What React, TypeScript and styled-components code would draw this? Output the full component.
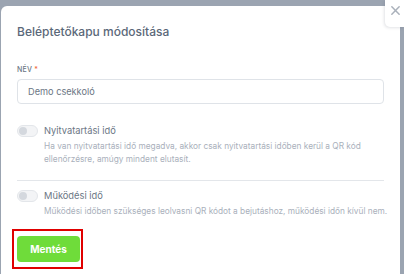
import styled, { createGlobalStyle } from "styled-components";

const GlobalStyle = createGlobalStyle`
  html, body {
    margin: 0;
    padding: 0;
    width: 404px;
    height: 274px;
    overflow: hidden;
    background: #9ba4b1;
    font-family: Inter, "Noto Sans", sans-serif;
  }
`;

const Backdrop = styled.div`
  position: relative;
  width: 404px;
  height: 274px;
  padding: 6px 4px 0 1px;
  box-sizing: border-box;
`;

const Modal = styled.div`
  background: #fff;
  height: 100%;
  border-radius: 6px 6px 0 0;
  padding: 18px 16px 0 16px;
  box-sizing: border-box;
`;

const CloseButton = styled.button`
  position: absolute;
  top: 0;
  right: 0;
  width: 19px;
  height: 27px;
  border: none;
  background: #fff;
  border-radius: 0 0 0 5px;
  box-shadow: -1px 1px 3px rgba(60, 70, 90, 0.15);
  display: flex;
  align-items: center;
  justify-content: center;
  padding: 0 0 6px 2px;
  color: #a9b0ba;
`;

const Title = styled.h2`
  margin: 0 0 26px 0;
  font-size: 12px;
  font-weight: 500;
  color: #5b6879;
`;

const Label = styled.div`
  font-size: 7px;
  font-weight: 500;
  color: #6b7684;
  letter-spacing: 0.2px;
  margin-bottom: 5px;
`;

const Req = styled.span`
  color: #f0643c;
`;

const Input = styled.div`
  height: 25px;
  border: 1px solid #dfe3e8;
  border-radius: 4px;
  box-sizing: border-box;
  display: flex;
  align-items: center;
  padding-left: 10px;
  font-size: 9.2px;
  color: #6b7684;
`;

const SwitchRow = styled.div<{ $top: number }>`
  display: flex;
  gap: 6px;
  margin-top: ${(p) => p.$top}px;
`;

const Track = styled.div`
  width: 18px;
  height: 10px;
  border-radius: 6px;
  border: 1px solid #e3e6ea;
  background: #f3f4f6;
  display: flex;
  align-items: center;
  padding-left: 1px;
  flex-shrink: 0;
`;

const Knob = styled.div`
  width: 8px;
  height: 8px;
  border-radius: 50%;
  background: #d4d8de;
`;

const SwitchText = styled.div`
  display: flex;
  flex-direction: column;
  margin-right: -8px;
`;

const SwitchLabel = styled.div`
  font-size: 9.3px;
  color: #6b7684;
  line-height: 12px;
`;

const Help = styled.div`
  font-size: 8.3px;
  color: #a9b0bb;
  line-height: 13px;
  margin-top: 3px;
`;

const Divider = styled.hr`
  border: none;
  border-top: 1px solid #e3e6ea;
  margin: 14px 0 0 0;
`;

const Outline = styled.div`
  display: inline-block;
  margin: 11px 0 0 -5px;
  border: 2px solid #e00000;
  padding: 5px 1px 5px 3px;
`;

const SaveButton = styled.button`
  width: 63px;
  height: 26px;
  border: none;
  border-radius: 4px;
  background: #6fdc3a;
  color: #fff;
  font-family: Inter, "Noto Sans", sans-serif;
  font-weight: 700;
  font-size: 10px;
  display: block;
`;

export default function App() {
  return (
    <>
      <GlobalStyle />
      <Backdrop>
        <Modal>
          <Title>Beléptetőkapu módosítása</Title>
          <Label>
            NÉV <Req>*</Req>
          </Label>
          <Input>Demo csekkoló</Input>
          <SwitchRow $top={21}>
            <Track>
              <Knob />
            </Track>
            <SwitchText>
              <SwitchLabel>Nyitvatartási idő</SwitchLabel>
              <Help>
                Ha van nyitvatartási idő megadva, akkor csak nyitvatartási
                időben kerül a QR kód
                <br />
                ellenőrzésre, amúgy mindent elutasít.
              </Help>
            </SwitchText>
          </SwitchRow>
          <Divider />
          <SwitchRow $top={9}>
            <Track>
              <Knob />
            </Track>
            <SwitchText>
              <SwitchLabel>Működési idő</SwitchLabel>
              <Help>
                Működési időben szükséges leolvasni QR kódot a bejutáshoz,
                működési időn kívül nem.
              </Help>
            </SwitchText>
          </SwitchRow>
          <Outline>
            <SaveButton>Mentés</SaveButton>
          </Outline>
        </Modal>
        <CloseButton aria-label="close">
          <svg width="11" height="11" viewBox="0 0 12 12">
            <path
              d="M2 2 L10 10 M10 2 L2 10"
              stroke="currentColor"
              strokeWidth="1.6"
              strokeLinecap="round"
            />
          </svg>
        </CloseButton>
      </Backdrop>
    </>
  );
}
